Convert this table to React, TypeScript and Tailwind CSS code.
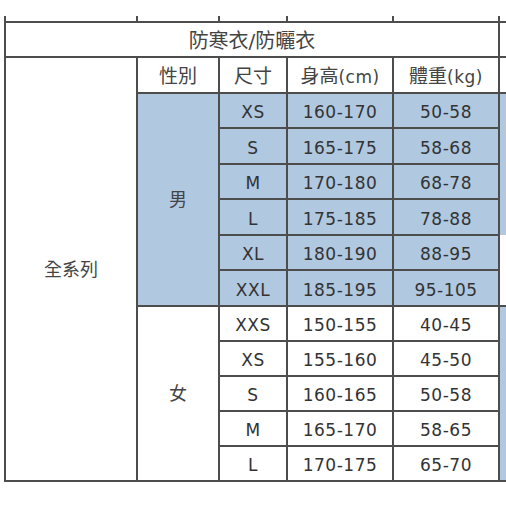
const men = [
  ["XS", "160-170", "50-58"],
  ["S", "165-175", "58-68"],
  ["M", "170-180", "68-78"],
  ["L", "175-185", "78-88"],
  ["XL", "180-190", "88-95"],
  ["XXL", "185-195", "95-105"],
];

const women = [
  ["XXS", "150-155", "40-45"],
  ["XS", "155-160", "45-50"],
  ["S", "160-165", "50-58"],
  ["M", "165-170", "58-65"],
  ["L", "170-175", "65-70"],
];

const line = "border-2 border-[#4d4d4d]";
const num = "text-[17px] tracking-[0.5px]";

export default function App() {
  return (
    <div className="w-[506px] h-[506px] overflow-hidden bg-white pt-4 pl-1 text-[#333] font-['DejaVu_Sans','Noto_Sans_CJK_TC',sans-serif]">
      <table className="table-fixed border-collapse w-[534px] text-center">
        <colgroup>
          <col className="w-[132px]" />
          <col className="w-[82px]" />
          <col className="w-[68px]" />
          <col className="w-[106px]" />
          <col className="w-[106px]" />
          <col className="w-[40px]" />
        </colgroup>
        <tbody>
          {/* cut-off row above */}
          <tr className="h-[6px]">
            {[0, 1, 2, 3, 4, 5].map((i) => (
              <td key={i} className="border-x-2 border-[#4d4d4d] p-0" />
            ))}
          </tr>
          <tr className="h-[35px]">
            <td colSpan={5} className={`${line} p-0 pt-[2px] text-[20px] text-[#444]`}>
              防寒衣/防曬衣
            </td>
            <td className={`${line} p-0`} />
          </tr>
          <tr className="h-[36px]">
            <td rowSpan={12} className={`${line} p-0 text-[18px] text-[#444]`}>
              全系列
            </td>
            <td className={`${line} p-0 pt-[3px] text-[19px] text-[#444]`}>性別</td>
            <td className={`${line} p-0 pt-[3px] text-[19px] text-[#444]`}>尺寸</td>
            <td className={`${line} p-0 pt-[3px] text-[19px] text-[#444]`}>
              身高<span className={num}>(cm)</span>
            </td>
            <td className={`${line} p-0 pt-[3px] text-[19px] text-[#444]`}>
              體重<span className={num}>(kg)</span>
            </td>
            <td className={`${line} p-0`} />
          </tr>
          {men.map((r, i) => (
            <tr key={"m" + i} className={i % 2 ? "h-[36px]" : "h-[35px]"}>
              {i === 0 && (
                <td rowSpan={6} className={`${line} p-0 bg-[#b0c8e0] text-[18px] text-[#444]`}>
                  男
                </td>
              )}
              {r.map((c, j) => (
                <td key={j} className={`${line} p-0 pt-[5px] bg-[#b0c8e0] ${num}`}>
                  {c}
                </td>
              ))}
              {i === 0 && <td rowSpan={4} className="border-l-2 border-[#4d4d4d] p-0 bg-[#b0c8e0]" />}
              {i === 4 && <td rowSpan={2} className="border-l-2 border-[#4d4d4d] p-0 bg-white" />}
            </tr>
          ))}
          {women.map((r, i) => (
            <tr key={"w" + i} className="h-[35px]">
              {i === 0 && (
                <td rowSpan={5} className={`${line} p-0 text-[18px] text-[#444]`}>
                  女
                </td>
              )}
              {r.map((c, j) => (
                <td key={j} className={`${line} p-0 pt-[5px] ${num}`}>
                  {c}
                </td>
              ))}
              {i === 0 && (
                <td rowSpan={5} className="border-l-2 border-y-2 border-[#4d4d4d] p-0 bg-[#b0c8e0]" />
              )}
            </tr>
          ))}
        </tbody>
      </table>
    </div>
  );
}
